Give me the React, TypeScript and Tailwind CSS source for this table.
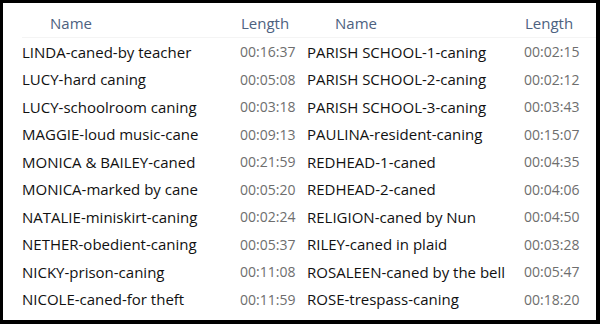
import React from 'react';

type Clip = { name: string; length: string };

const leftClips: Clip[] = [
  { name: 'LINDA-caned-by teacher', length: '00:16:37' },
  { name: 'LUCY-hard caning', length: '00:05:08' },
  { name: 'LUCY-schoolroom caning', length: '00:03:18' },
  { name: 'MAGGIE-loud music-cane', length: '00:09:13' },
  { name: 'MONICA & BAILEY-caned', length: '00:21:59' },
  { name: 'MONICA-marked by cane', length: '00:05:20' },
  { name: 'NATALIE-miniskirt-caning', length: '00:02:24' },
  { name: 'NETHER-obedient-caning', length: '00:05:37' },
  { name: 'NICKY-prison-caning', length: '00:11:08' },
  { name: 'NICOLE-caned-for theft', length: '00:11:59' },
];

const rightClips: Clip[] = [
  { name: 'PARISH SCHOOL-1-caning', length: '00:02:15' },
  { name: 'PARISH SCHOOL-2-caning', length: '00:02:12' },
  { name: 'PARISH SCHOOL-3-caning', length: '00:03:43' },
  { name: 'PAULINA-resident-caning', length: '00:15:07' },
  { name: 'REDHEAD-1-caned', length: '00:04:35' },
  { name: 'REDHEAD-2-caned', length: '00:04:06' },
  { name: 'RELIGION-caned by Nun', length: '00:04:50' },
  { name: 'RILEY-caned in plaid', length: '00:03:28' },
  { name: 'ROSALEEN-caned by the bell', length: '00:05:47' },
  { name: 'ROSE-trespass-caning', length: '00:18:20' },
];

const FileColumn: React.FC<{ clips: Clip[]; nameWidth: string }> = ({ clips, nameWidth }) => {
  return (
    <div className="flex flex-col">
      {/* Header */}
      <div className="flex h-[28px] items-center text-[15px] text-[#4d6180] border-b border-[#f4f4f4]">
        <div className={`${nameWidth} pl-[28px]`}>Name</div>
        <div className="pl-[1px]">Length</div>
      </div>
      {clips.map((clip, index) => (
        <div key={index} className="flex h-[27.5px] items-center">
          <div className={`${nameWidth} text-[15px] text-[#111]`}>{clip.name}</div>
          <div className="text-[14px] text-[#6e6e6e]">{clip.length}</div>
        </div>
      ))}
    </div>
  );
};

const App: React.FC = () => {
  return (
    <div className="w-[600px] h-[324px] bg-black pt-[3px] pl-[3px] pr-[4px] pb-[4px]">
      <div
        className="h-full bg-white flex pt-[7px]"
        style={{ fontFamily: '"Open Sans", "Noto Sans", sans-serif' }}
      >
        <div className="w-[304px] pl-[19px]">
          <FileColumn clips={leftClips} nameWidth="w-[218px]" />
        </div>
        <div className="flex-1">
          <FileColumn clips={rightClips} nameWidth="w-[217px]" />
        </div>
      </div>
    </div>
  );
};

export default App;
